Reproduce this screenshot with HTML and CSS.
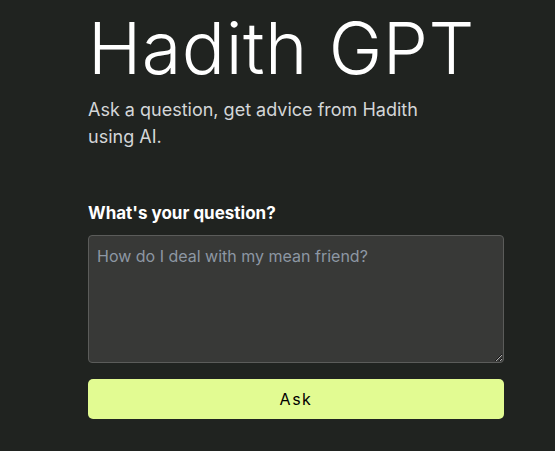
FILE: index.html
```html
<!DOCTYPE html>
<html lang="en">
<head>
    <meta charset="UTF-8">
    <meta name="viewport" content="width=device-width, initial-scale=1.0">
    <title>Hadith GPT</title>
    <link rel="stylesheet" href="styles.css">
</head>
<body>
    <div class="container">
        <h1>Hadith GPT</h1>
        <p class="subtitle">Ask a question, get advice from Hadith using AI.</p>

        <form class="ask-form">
            <label for="question">What's your question?</label>
            <textarea id="question" placeholder="How do I deal with my mean friend?"></textarea>
            <button type="button" class="ask-button">Ask</button>
        </form>
    </div>
</body>
</html>
```

FILE: styles.css
```css
body {
    margin: 0;
    background-color: #202320;
    color: #fff;
    font-family: Inter, "Noto Sans", sans-serif;
}
.container {
    width: 416px;
    padding: 8px 0 0 88px;
}
h1 {
    margin: 0;
    font-size: 72px;
    font-weight: 300;
    line-height: 80px;
    letter-spacing: 0.5px;
}
.subtitle {
    margin: 8px 0 0;
    max-width: 370px;
    font-size: 18px;
    line-height: 27px;
    color: #d4d6d8;
}
.ask-form {
    display: flex;
    flex-direction: column;
    margin-top: 51px;
}
label {
    font-size: 17px;
    font-weight: 700;
    line-height: 24px;
}
textarea {
    height: 128px;
    margin-top: 10px;
    padding: 8px;
    box-sizing: border-box;
    background-color: #383937;
    border: 1px solid #5b5c5a;
    border-radius: 4px;
    color: #fff;
    font-family: inherit;
    font-size: 16px;
    line-height: 24px;
}
textarea::placeholder {
    color: #8d97a3;
}
.ask-button {
    height: 40px;
    margin-top: 16px;
    border: none;
    border-radius: 5px;
    background-color: #e2fb92;
    color: #000;
    font-family: inherit;
    font-size: 16px;
    letter-spacing: 1.5px;
    cursor: pointer;
}
```
